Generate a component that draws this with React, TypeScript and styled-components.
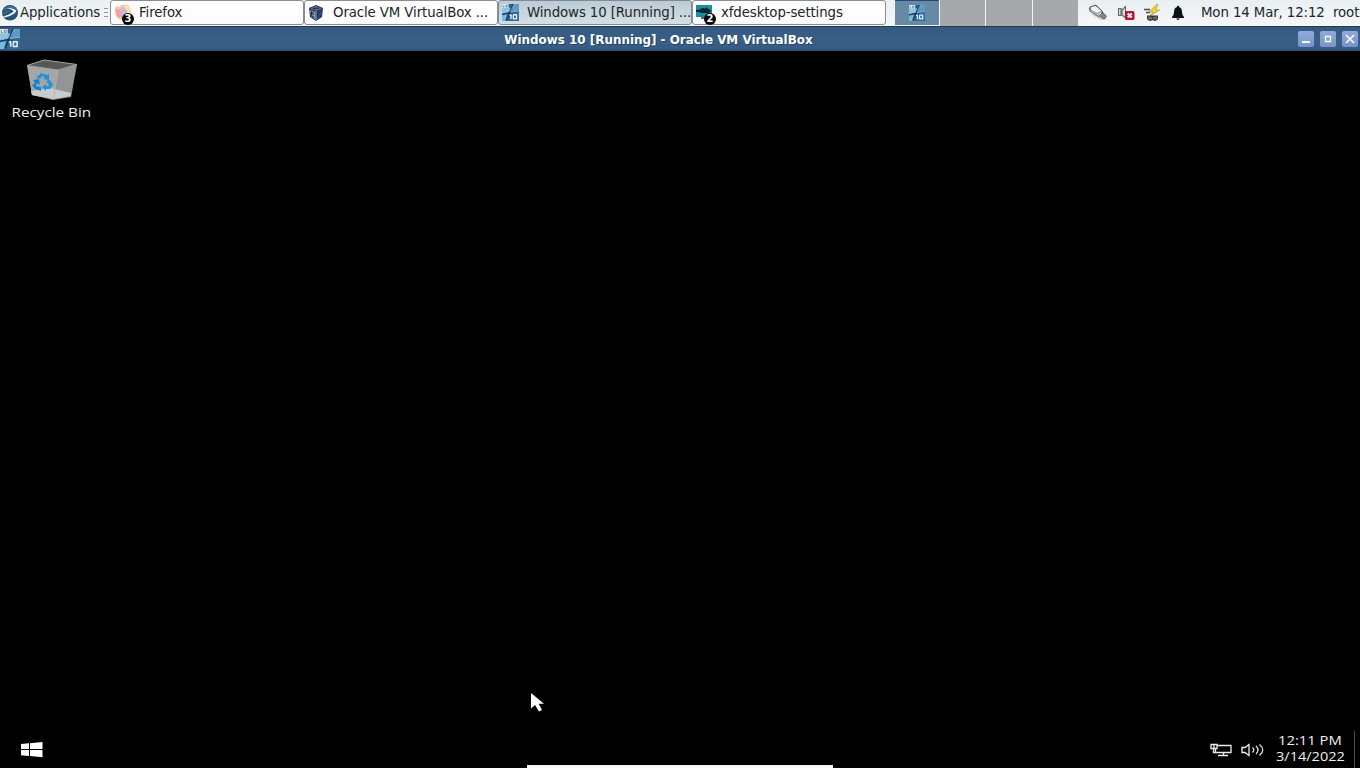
import * as React from 'react';
import styled, { createGlobalStyle } from 'styled-components';

const GlobalStyle = createGlobalStyle`
	body {
		margin: 0;
		background: #000;
		overflow: hidden;
	}

	svg {
		display: block;
		flex: none;
	}
`;

const XfceLogo = () => (
	<svg width="18" height="18" viewBox="0 0 18 18">
		<ellipse cx="9" cy="8.8" rx="8" ry="7.8" fill="#235377" />
		<path d="M2.2 6Q5 2 10 2Q14 2.5 15.5 5Q11 3.8 6 5Z" fill="#3d7298" />
		<path d="M5.5 4C9.5 3.6 13.5 4.6 15.4 6.4C15 9.4 9 12.4 2.4 13.6L1.8 12.6C6 11.4 11 9.4 12.4 7.2C11 5.4 8 4.6 5.5 4Z" fill="#eef5f8" />
		<path d="M2 8.5L6.5 6.2L9.5 7.4L5 9.8L2 10.5Z" fill="#34688e" />
	</svg>
);

const FirefoxIcon = () => (
	<svg width="22" height="24" viewBox="0 0 22 24">
		<path d="M1 7Q2 4 5 6Q8 3 11 4L13 3Q18 7 17 12Q16 19 9 19Q1 18 1 11Z" fill="#f6c3b1" />
		<path d="M11 4L13 3Q19 9 16 14L11 16Z" fill="#fae3b3" />
		<circle cx="9" cy="11" r="4.3" fill="#d4b5d8" />
		<path d="M1 9Q4 7 8 10L6 12Q7 16 13 15Q8 19 3 15Z" fill="#f1a4a6" />
	</svg>
);

const CubeIcon = () => (
	<svg width="16" height="18" viewBox="0 0 16 18">
		<path d="M1 4L8 1L15 4L14 13L8 17L2 13Z" fill="#253759" />
		<path d="M2 4.5L8 2L14 4.5L8 7Z" fill="#5b6c8c" />
		<path d="M2 6L7 8V15L3 12Z" fill="#8b9bb9" />
		<path d="M14 6L9 8V15L13 12Z" fill="#364c77" />
		<path d="M3.5 7.5V11.5L6 13.5M5 8V11M12.5 8L10 9V13M5 4.5L11 4" fill="none" stroke="#172746" strokeWidth="1" />
		<path d="M8 7V16" stroke="#bcc8dc" strokeWidth=".8" />
	</svg>
);

const Win10Icon = ({ size = 18 }: { size?: number }) => (
	<svg width={size} height={size} viewBox="0 0 18 18">
		<rect width="18" height="18" fill="#2b628f" />
		<path d="M0 4H9.5L7 9L0 10.5Z" fill="#8cc3e6" />
		<path d="M13 0H18V7L10.5 8Z" fill="#5b9dca" />
		<path d="M0 12L5.5 10.8L3.5 18H0Z" fill="#7ab8de" />
		<path d="M9 10L18 8.5V18H7Z" fill="#2f6c99" />
		<path d="M12 0L4.8 17M0 11L7 9.5L13 12" fill="none" stroke="#173c60" strokeWidth="1.3" />
		<path d="M13 0L9 8.5L18 7.4" fill="none" stroke="#c6e5f3" strokeWidth=".6" />
		<rect width="7" height="4.2" fill="#dce7ed" />
		<path d="M1.2 1.2V3.2H2.6M4 1.2V3.2H5.6V1.2Z" fill="none" stroke="#6c7383" strokeWidth=".7" />
		<path d="M8 12L9.6 11.2V16M12 11.4H15.4V15.7H12Z" fill="none" stroke="#e4eff5" strokeWidth="1.4" strokeLinejoin="round" />
	</svg>
);

const DesktopIcon = () => (
	<svg width="18" height="20" viewBox="0 0 18 20">
		<rect y="2" width="16" height="12" fill="#168fa2" />
		<path d="M0 7L4 6.6L6 5L10 5.5V4L15.5 8L11 11.5V10H5L3 9H0Z" fill="#10262d" />
		<path d="M5 14H11V16H5Z" fill="#59666b" />
	</svg>
);

const PlugIcon = () => (
	<svg width="20" height="18" viewBox="0 0 20 18">
		<path d="M3 10L13 16L19 15.5L17 12Z" fill="#c8caca" />
		<path d="M2 3L8 1L15 8L18.5 12L16 15L12 12.5L4 8Q0 6 2 3Z" fill="#8b8b8b" />
		<path d="M3 3L7.5 2L13.5 7L9 9L3 5.5Z" fill="#f2f2f2" />
		<path d="M3 6L9 10L13.5 8L13.5 10L11 12L4 8Z" fill="#d2d3d3" />
		<path d="M2 3L8 1L15 8L11 12.5L3 8Q0 5 2 3ZM14 9L18.5 12L16 15L12 12" fill="none" stroke="#565656" strokeWidth=".9" />
	</svg>
);

const MutedIcon = () => (
	<svg width="18" height="18" viewBox="0 0 18 18">
		<path d="M1.5 4.5V11.5H4V4.5ZM5 6L8.5 2.5V14L5 11Z" fill="#d9dcdc" stroke="#666a6b" strokeWidth="1.1" />
		<rect x="8" y="7" width="9.5" height="9" rx="1.6" fill="#bd1236" />
		<path d="M10.7 9.5L14.7 13.5M14.7 9.5L10.7 13.5" stroke="#fff" strokeWidth="1.8" />
	</svg>
);

const PowerIcon = () => (
	<svg width="18" height="20" viewBox="0 0 18 20">
		<path d="M0 6.5H6M2 9.5H6" stroke="#4b504d" strokeWidth="1.4" />
		<path d="M12.5 1.5L5 9H9L6 13L15.5 7H11.5L14 1.5Z" fill="#f4cf37" stroke="#a28a35" strokeWidth=".6" />
		<path d="M3 12.5H14V16Q11.5 19.5 8.5 17Q5.5 19.5 3 16Z" fill="#343b38" />
		<path d="M5 13.5V16.5M7 14V16.5M10 14V16.5M12 13.5V16.5" stroke="#b7bab4" strokeWidth=".8" />
	</svg>
);

const BellIcon = () => (
	<svg width="14" height="16" viewBox="0 0 14 16">
		<path d="M7 .8Q8.3 .8 8.2 2.2Q11 3 11 7Q11 10 13 12V13H1V12Q3 10 3 7Q3 3 5.8 2.2Q5.7 .8 7 .8ZM5.2 13.6H8.8Q8.5 15 7 15Q5.5 15 5.2 13.6Z" fill="#0c1216" />
	</svg>
);

const RecycleIcon = () => (
	<svg width="54" height="44" viewBox="0 0 54 44">
		<path d="M2 6.5L19 1L52 5.5L46 38L28 41L7 36Z" fill="#8e9191" />
		<path d="M2 6.5L19 1L52 5.5L33 11Z" fill="#565858" stroke="#a0a2a2" strokeWidth="1" />
		<path d="M2.5 7L33 11L28.5 40L7 36Z" fill="#a3a6a7" />
		<path d="M33 11L51 6L45.5 37L28.5 40Z" fill="#929595" />
		<path d="M6 32L25 29L46 34L45.5 37L28.5 40L7 36Z" fill="#c9cccc" />
		<path d="M33 11L28.5 40" stroke="#b4b6b6" strokeWidth=".8" />
		<path d="M13 17L16 14L22 16L24 15L24 21L18 20L20 18L17 17L15 20L11 18Z" fill="#2191d8" />
		<path d="M8 21L14 20L15 26L12 24L11 27L16 28V32L10 30L7 26L10 24Z" fill="#1680cc" />
		<path d="M21 22L25 21L28 26L25 30L21 30V32L17 28L21 25V27H23L24 26Z" fill="#2492da" />
	</svg>
);

const TrayNetwork = () => (
	<svg width="22" height="14" viewBox="0 0 22 14">
		<path d="M7.5 2.5H21V9.5H5.5V6M13.5 10V12.5M8 12.5H18M1 1.5H7V5.5H1ZM4 1.5V5.5M3.5 6V9.5H5.5" fill="none" stroke="#ececec" strokeWidth="1.3" />
	</svg>
);

const TrayVolume = () => (
	<svg width="24" height="14" viewBox="0 0 24 14">
		<path d="M1 4.5H4L8 1.5V12.5L4 9.5H1Z" fill="none" stroke="#f1f1f1" strokeWidth="1.3" />
		<path d="M11.5 4.5Q14 7 11.5 9.5M15 3Q19 7 15 11M18.5 1.5Q25 7 18.5 12.5" fill="none" stroke="#dedede" strokeWidth="1.3" />
	</svg>
);

interface Task {
	label: string;
	icon: React.ReactNode;
	count?: number;
	active?: boolean;
}

const tasks: Task[] = [
	{ label: 'Firefox', icon: <FirefoxIcon />, count: 3 },
	{ label: 'Oracle VM VirtualBox ...', icon: <CubeIcon /> },
	{ label: 'Windows 10 [Running] ...', icon: <Win10Icon size={17} />, active: true },
	{ label: 'xfdesktop-settings', icon: <DesktopIcon />, count: 2 },
];

class App extends React.Component {
	render() {
		return (
			<Screen>
				<GlobalStyle />
				<Panel>
					<Applications>
						<XfceLogo />
						<span>Applications</span>
						<Handle><i /><i /><i /></Handle>
					</Applications>
					<TaskList>
						{
							tasks.map((task: Task) => (
								<TaskButton key={task.label} $active={task.active}>
									<TaskIcon>
										{task.icon}
										{task.count && <Badge>{task.count}</Badge>}
									</TaskIcon>
									<span>{task.label}</span>
								</TaskButton>
							))
						}
					</TaskList>
					<Pager>
						<Workspace $active><Win10Icon size={16} /></Workspace>
						<Workspace />
						<Workspace />
						<Workspace />
					</Pager>
					<Tray>
						<PlugIcon />
						<MutedIcon />
						<PowerIcon />
						<BellIcon />
					</Tray>
					<Clock>Mon 14 Mar, 12:12</Clock>
					<User>root</User>
				</Panel>
				<TitleBar>
					<Win10Icon size={20} />
					<Title>Windows 10 [Running] - Oracle VM VirtualBox</Title>
					<WindowButtons>
						<WindowButton>
							<svg width="16" height="16" viewBox="0 0 16 16"><path d="M4 11H12" stroke="#fff" strokeWidth="2" /></svg>
						</WindowButton>
						<WindowButton>
							<svg width="16" height="16" viewBox="0 0 16 16"><path d="M5.5 5.5H10.5V10.5H5.5Z" fill="none" stroke="#fff" strokeWidth="1.4" /></svg>
						</WindowButton>
						<WindowButton>
							<svg width="16" height="16" viewBox="0 0 16 16"><path d="M4 4L12 12M12 4L4 12" stroke="#fff" strokeWidth="1.6" /></svg>
						</WindowButton>
					</WindowButtons>
				</TitleBar>
				<Guest>
					<DesktopItem>
						<RecycleIcon />
						<ItemLabel>Recycle Bin</ItemLabel>
					</DesktopItem>
					<Cursor width="16" height="22" viewBox="0 0 16 22">
						<path d="M1 1V16.5L5 13L9 19.5L12 18L8.7 11.8H14Z" fill="#fff" />
					</Cursor>
					<MiniToolbar />
					<GuestBar>
						<svg width="22" height="16" viewBox="0 0 22 16">
							<path d="M0 2L8 1.3V7H0ZM9 1.2L21.5 0V7H9ZM0 8H8V14L0 13.3ZM9 8H21.5V15.2L9 14.1Z" fill="#fff" />
						</svg>
						<GuestTray>
							<TrayNetwork />
							<TrayVolume />
							<GuestClock>
								<GuestTime $stretch={1.23}>12:11 PM</GuestTime>
								<GuestTime $stretch={1.21}>3/14/2022</GuestTime>
							</GuestClock>
							<ShowDesktop />
						</GuestTray>
					</GuestBar>
				</Guest>
			</Screen>
		);
	}
}

const Screen = styled.div`
	display: flex;
	flex-direction: column;
	width: 1360px;
	height: 768px;
	overflow: hidden;
	background: #000;
	font-family: 'DejaVu Sans', sans-serif;
`;

const Panel = styled.div`
	display: flex;
	flex: none;
	box-sizing: border-box;
	height: 27px;
	border-bottom: 1px solid #26384f;
	background: linear-gradient(#e9eff1, #f4f7f9);
	color: #20262a;
	font-size: 13.33px;
	letter-spacing: -0.11px;
	line-height: 25px;
	white-space: nowrap;
`;

const Applications = styled.div`
	display: flex;
	align-items: center;
	box-sizing: border-box;
	width: 110px;
	height: 25px;
	padding-left: 1px;
	gap: 1px;
`;

const Handle = styled.div`
	display: flex;
	flex-direction: column;
	gap: 3px;
	margin-left: 3px;

	i {
		width: 4px;
		height: 1px;
		background: #8e979b;
	}
`;

const TaskList = styled.div`
	display: flex;
	width: 776px;
	height: 25px;
`;

const TaskButton = styled.div<{ $active?: boolean }>`
	display: flex;
	box-sizing: border-box;
	width: 194px;
	height: 25px;
	padding-left: 3px;
	border: 1px solid ${props => props.$active ? '#7e8a96' : '#8c8c94'};
	border-radius: 3px;
	background: ${props => props.$active ? 'linear-gradient(#bccbd4, #d4dfe5)' : 'linear-gradient(#fff, #fbfbfc)'};
	line-height: 23px;
`;

const TaskIcon = styled.div`
	position: relative;
	display: flex;
	flex: none;
	align-items: center;
	width: 25px;
	height: 23px;
`;

const Badge = styled.b`
	position: absolute;
	left: 8px;
	top: 12px;
	width: 12px;
	height: 12px;
	border-radius: 50%;
	background: #050505;
	color: #fff;
	font-size: 10px;
	line-height: 12px;
	text-align: center;
`;

const Pager = styled.div`
	display: flex;
	gap: 1px;
	margin-left: 8px;
	height: 26px;
	background: #f2f5f6;
`;

const Workspace = styled.div<{ $active?: boolean }>`
	display: flex;
	align-items: center;
	justify-content: center;
	box-sizing: border-box;
	width: ${props => props.$active ? 45 : 45.33}px;
	border: solid #f2f5f6;
	border-width: ${props => props.$active ? '0 0 1px 1px' : '0'};
	background: ${props => props.$active ? 'linear-gradient(#264a73 1px, #668aa4 1px)' : '#a5a9ab'};
`;

const Tray = styled.div`
	display: flex;
	align-items: center;
	width: 113px;
	height: 25px;
	margin-left: 10px;
	gap: 9px;
`;

const Clock = styled.div`
	width: 132px;
`;

const User = styled.div`
	flex: 1;
`;

const TitleBar = styled.div`
	display: flex;
	flex: none;
	align-items: center;
	box-sizing: border-box;
	height: 24px;
	border-bottom: 1px solid #2d4b6b;
	background: linear-gradient(#345a82, #395f86 50%, #365c84);
	color: #fff;
`;

const Title = styled.div`
	flex: 1;
	padding-top: 3px;
	padding-right: 1px;
	font-size: 11.93px;
	font-weight: bold;
	line-height: 20px;
	text-align: center;
	text-shadow: 1px 1px 0 #234466;
`;

const WindowButtons = styled.div`
	display: flex;
	gap: 6px;
	margin-right: 2px;
`;

const WindowButton = styled.div`
	width: 16px;
	height: 16px;
	border-radius: 2px;
	background: linear-gradient(#90abd9, #7594ca);
`;

const Guest = styled.div`
	position: relative;
	display: flex;
	flex: 1;
	flex-direction: column;
	justify-content: space-between;
	background: #000;
	color: #f0f0f0;
	font-family: 'Open Sans', 'Noto Sans', sans-serif;
`;

const DesktopItem = styled.div`
	display: flex;
	flex-direction: column;
	align-items: center;
	width: 103px;
	padding-top: 8px;
`;

const ItemLabel = styled.div`
	padding-top: 1px;
	font-size: 12px;
	line-height: 17px;
	white-space: nowrap;
	transform: scaleX(1.27);
`;

const Cursor = styled.svg`
	position: absolute;
	left: 530px;
	top: 641px;
`;

const MiniToolbar = styled.div`
	position: absolute;
	left: 527px;
	bottom: 0;
	width: 306px;
	height: 3px;
	background: #f7f7f5;
`;

const GuestBar = styled.div`
	display: flex;
	align-items: center;
	justify-content: space-between;
	height: 37px;
	padding-left: 21px;
`;

const GuestTray = styled.div`
	display: flex;
	align-items: center;
	height: 37px;
	gap: 9px;
`;

const GuestClock = styled.div`
	display: flex;
	flex-direction: column;
	align-items: center;
	width: 70px;
	margin-left: 1px;
	padding-bottom: 1px;
`;

const GuestTime = styled.div<{ $stretch: number }>`
	font-size: 12px;
	line-height: 16px;
	white-space: nowrap;
	transform: scaleX(${props => props.$stretch});
`;

const ShowDesktop = styled.div`
	width: 1px;
	height: 37px;
	margin-right: 5px;
	background: #4c4c4c;
`;

export default App;
